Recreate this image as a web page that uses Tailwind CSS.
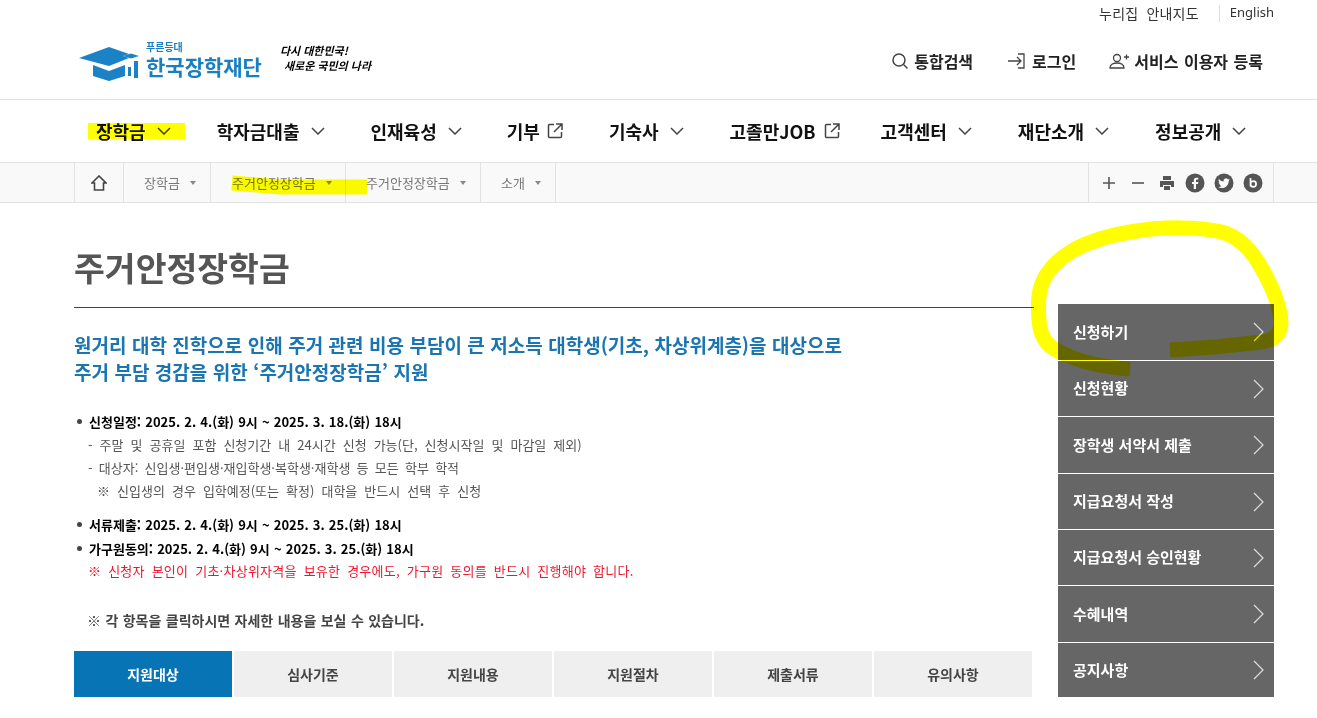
<!DOCTYPE html>
<html lang="ko">
<head>
  <meta charset="UTF-8" />
  <title>주거안정장학금</title>
  <script src="https://cdn.jsdelivr.net/npm/@tailwindcss/browser@4"></script>
</head>
<body class="relative bg-white h-[718px] overflow-hidden text-[#222] font-['Noto_Sans_CJK_KR','Noto_Sans',sans-serif]">

  <!-- header -->
  <header class="h-[100px] border-b border-[#e2e2e2]">
    <div class="w-[1200px] ml-[74px]">
      <div class="h-[26px] flex justify-end items-center text-[14px] text-[#333]">
        <a class="[word-spacing:4px] tracking-[0.2px]">누리집 안내지도</a>
        <span class="w-px h-[17px] bg-[#ddd] ml-[20px] mr-[10px]"></span>
        <a class="font-['Noto_Sans'] text-[13px]">English</a>
      </div>
      <div class="h-[73px] flex items-center justify-between">
        <div class="flex items-center ml-[5px] mb-[2px]">
          <svg width="66" height="36" viewBox="0 0 66 36" class="mt-[3px]">
            <path d="M0 13 30 2 50 9 44 11 50 13 30 21Z" fill="#1b82c5"/>
            <path d="M14 20 30 26 46 20V31L30 36 14 31Z" fill="#1b82c5"/>
            <path d="M44 11 52 8.500 60 11 52 13.500Z" fill="#1b82c5"/>
            <path d="M49 22h3v9h-3zM55 16h4v17h-4z" fill="#1b82c5"/>
          </svg>
          <div class="ml-[1px] text-[#1a7fc1] font-bold">
            <div class="text-[10px] leading-[11px] mb-[2px] -mt-[5px]">푸른등대</div>
            <div class="text-[21px] leading-[24px]">한국장학재단</div>
          </div>
          <div class="ml-[18px] -mt-[8px] text-[11px] leading-[15px] font-bold italic text-black">
            <div>다시 대한민국!</div>
            <div class="ml-[4px]">새로운 국민의 나라</div>
          </div>
        </div>
        <div class="flex items-center text-[16px] font-semibold mr-[11px] mb-[4px]">
          <svg width="18" height="18" viewBox="0 0 18 18" fill="none" stroke="#444" stroke-width="1.500" class="mr-[5px]"><circle cx="8" cy="8" r="6"/><path d="m12.500 12.500 4 4"/></svg>
          <span>통합검색</span>
          <svg width="20" height="18" viewBox="0 0 20 18" fill="none" stroke="#444" stroke-width="1.300" class="ml-[34px] mr-[5px]"><path d="M1 9h13M10 5l4 4-4 4M11 2h6v14h-6"/></svg>
          <span>로그인</span>
          <svg width="20" height="18" viewBox="0 0 20 18" fill="none" stroke="#444" stroke-width="1.300" class="ml-[33px] mr-[5px]"><circle cx="8" cy="6" r="3.500"/><path d="M1 16c0-3 3-5 7-5s7 2 7 5ZM15 5h5M17.500 2.500v5"/></svg>
          <span class="[word-spacing:1px]">서비스 이용자 등록</span>
        </div>
      </div>
    </div>
  </header>

  <!-- main nav -->
  <nav class="h-[62px] w-[1200px] ml-[74px] flex items-center gap-[46px] pl-[22px] text-[18px] font-semibold text-[#111]">
    <a class="flex items-center gap-[11px]">장학금<svg width="14" height="8" viewBox="0 0 14 8" fill="none" stroke="#444" stroke-width="1.500"><path d="m1 1 6 6 6-6"/></svg></a>
    <a class="flex items-center gap-[11px]">학자금대출<svg width="14" height="8" viewBox="0 0 14 8" fill="none" stroke="#444" stroke-width="1.500"><path d="m1 1 6 6 6-6"/></svg></a>
    <a class="flex items-center gap-[11px]">인재육성<svg width="14" height="8" viewBox="0 0 14 8" fill="none" stroke="#444" stroke-width="1.500"><path d="m1 1 6 6 6-6"/></svg></a>
    <a class="flex items-center gap-[7px] -ml-[1px]">기부<svg width="16" height="16" viewBox="0 0 16 16" fill="none" stroke="#444" stroke-width="1.500"><path d="M7 1.500H2.500a1 1 0 0 0-1 1v11a1 1 0 0 0 1 1h11a1 1 0 0 0 1-1V9M9 1h6v6M15 1 7 9"/></svg></a>
    <a class="flex items-center gap-[11px]">기숙사<svg width="14" height="8" viewBox="0 0 14 8" fill="none" stroke="#444" stroke-width="1.500"><path d="m1 1 6 6 6-6"/></svg></a>
    <a class="flex items-center gap-[8px] -mr-[5px]">고졸만JOB<svg width="16" height="16" viewBox="0 0 16 16" fill="none" stroke="#444" stroke-width="1.500"><path d="M7 1.500H2.500a1 1 0 0 0-1 1v11a1 1 0 0 0 1 1h11a1 1 0 0 0 1-1V9M9 1h6v6M15 1 7 9"/></svg></a>
    <a class="flex items-center gap-[11px]">고객센터<svg width="14" height="8" viewBox="0 0 14 8" fill="none" stroke="#444" stroke-width="1.500"><path d="m1 1 6 6 6-6"/></svg></a>
    <a class="flex items-center gap-[11px]">재단소개<svg width="14" height="8" viewBox="0 0 14 8" fill="none" stroke="#444" stroke-width="1.500"><path d="m1 1 6 6 6-6"/></svg></a>
    <a class="flex items-center gap-[11px]">정보공개<svg width="14" height="8" viewBox="0 0 14 8" fill="none" stroke="#444" stroke-width="1.500"><path d="m1 1 6 6 6-6"/></svg></a>
  </nav>

  <!-- breadcrumb -->
  <div class="h-[41px] bg-[#f9f9f9] border-y border-[#e2e2e2]">
    <div class="w-[1200px] h-full ml-[74px] flex justify-between text-[13px] text-[#777]">
      <div class="flex border-l border-[#e2e2e2]">
        <div class="w-[49px] flex items-center justify-center border-r border-[#e2e2e2]">
          <svg width="16" height="16" viewBox="0 0 16 16" fill="none" stroke="#444" stroke-width="1.600"><path d="M1 8 8 1l7 7h-2.500v7h-9V8Z"/></svg>
        </div>
        <div class="w-[87px] pl-[20px] flex items-center gap-[10px] border-r border-[#e2e2e2]">장학금<span class="border-x-[3.5px] border-x-transparent border-t-[4px] border-t-[#888]"></span></div>
        <div class="w-[135px] pl-[21px] flex items-center gap-[10px] border-r border-[#e2e2e2]">주거안정장학금<span class="border-x-[3.5px] border-x-transparent border-t-[4px] border-t-[#888]"></span></div>
        <div class="w-[135px] pl-[20px] flex items-center gap-[10px] border-r border-[#e2e2e2]">주거안정장학금<span class="border-x-[3.5px] border-x-transparent border-t-[4px] border-t-[#888]"></span></div>
        <div class="w-[75px] pl-[20px] flex items-center gap-[10px] border-r border-[#e2e2e2]">소개<span class="border-x-[3.5px] border-x-transparent border-t-[4px] border-t-[#888]"></span></div>
      </div>
      <div class="w-[186px] flex items-center pl-[13px] border-x border-[#e2e2e2]">
        <svg width="14" height="14" viewBox="0 0 14 14" stroke="#555" stroke-width="1.600"><path d="M1 7h12M7 1v12"/></svg>
        <svg width="14" height="14" viewBox="0 0 14 14" stroke="#555" stroke-width="1.600" class="ml-[15px]"><path d="M1 7h12"/></svg>
        <svg width="16" height="16" viewBox="0 0 16 16" fill="#555" class="ml-[14px]"><path d="M4 1h8v4H4zM1 6h14v6h-3v-2H4v2H1zM5 11h6v4H5z"/></svg>
        <svg width="20" height="20" viewBox="0 0 20 20" class="ml-[10px]"><circle cx="10" cy="10" r="9.500" fill="#555"/><path d="M11 16v-5h2l.300-2H11V7.600c0-.7.300-1 1-1h1.300V4.800L11.500 4.700C9.700 4.700 8.800 5.800 8.800 7.400V9H7v2h1.800v5Z" fill="#fff"/></svg>
        <svg width="20" height="20" viewBox="0 0 20 20" class="ml-[9px]"><circle cx="10" cy="10" r="9.500" fill="#555"/><path d="M15.500 6.500c-.5.200-1 .4-1.400.4.500-.3.900-.7 1.100-1.300-.5.300-1 .5-1.500.6a2.400 2.400 0 0 0-4.100 2.200C7.700 8.300 6 7.400 4.900 6c-.6 1.100-.3 2.500.8 3.200-.4 0-.8-.1-1.100-.3 0 1.200.8 2.200 1.900 2.400-.4.100-.7.100-1.100 0 .3 1 1.200 1.600 2.200 1.700-1 .8-2.200 1.100-3.500 1 3.900 2.400 10.300.8 10.700-6.300.4-.4.900-.8 1.200-1.200Z" fill="#fff"/></svg>
        <svg width="20" height="20" viewBox="0 0 20 20" class="ml-[9px]"><circle cx="10" cy="10" r="9.500" fill="#555"/><path d="M7.500 5v8.500M7.500 11a2.800 2.800 0 1 1 5.600 0 2.800 2.800 0 0 1-5.600 0Z" fill="none" stroke="#fff" stroke-width="1.700"/></svg>
      </div>
    </div>
  </div>

  <!-- content -->
  <main class="w-[1200px] ml-[74px] flex">
    <div class="w-[958px]">
      <h1 class="h-[105px] pt-[39px] text-[33.500px] leading-[50px] font-bold text-[#555] border-b border-[#444] mr-[-2px]">주거안정장학금</h1>
      <h2 class="mt-[23px] text-[19px] leading-[27px] font-semibold text-[#1a75b0] [word-spacing:0.150px]">원거리 대학 진학으로 인해 주거 관련 비용 부담이 큰 저소득 대학생(기초, 차상위계층)을 대상으로<br>주거 부담 경감을 위한 ‘주거안정장학금’ 지원</h2>

      <ul class="mt-[25px] text-[13px] leading-[23px] text-[#555]">
        <li class="flex items-center gap-[7px] ml-[3px] font-bold text-black [word-spacing:0.500px]"><span class="w-[5px] h-[5px] rounded-full bg-[#444]"></span>신청일정: 2025. 2. 4.(화) 9시 ~ 2025. 3. 18.(화) 18시</li>
        <li class="ml-[14px] [word-spacing:3.400px]">- 주말 및 공휴일 포함 신청기간 내 24시간 신청 가능(단, 신청시작일 및 마감일 제외)</li>
        <li class="ml-[14px] [word-spacing:2.600px]">- 대상자: 신입생·편입생·재입학생·복학생·재학생 등 모든 학부 학적</li>
        <li class="ml-[23px] [word-spacing:3.400px]">※ 신입생의 경우 입학예정(또는 확정) 대학을 반드시 선택 후 신청</li>
        <li class="flex items-center gap-[7px] ml-[3px] mt-[11px] font-bold text-black [word-spacing:0.500px]"><span class="w-[5px] h-[5px] rounded-full bg-[#444]"></span>서류제출: 2025. 2. 4.(화) 9시 ~ 2025. 3. 25.(화) 18시</li>
        <li class="flex items-center gap-[7px] ml-[3px] mt-[1px] font-bold text-black [word-spacing:0.500px]"><span class="w-[5px] h-[5px] rounded-full bg-[#444]"></span>가구원동의: 2025. 2. 4.(화) 9시 ~ 2025. 3. 25.(화) 18시</li>
        <li class="ml-[14px] -mt-[1px] text-[#f0142d] [word-spacing:3px] tracking-[0.250px]">※ 신청자 본인이 기초·차상위자격을 보유한 경우에도, 가구원 동의를 반드시 진행해야 합니다.</li>
      </ul>

      <p class="mt-[28px] ml-[13px] text-[14px] leading-[20px] font-semibold text-[#444] [word-spacing:0.500px]">※ 각 항목을 클릭하시면 자세한 내용을 보실 수 있습니다.</p>

      <div class="mt-[21px] grid grid-cols-6 gap-[2px] text-[14px] font-semibold text-[#444] text-center leading-[46px]">
        <a class="bg-[#0775b5] text-white">지원대상</a>
        <a class="bg-[#efefef]">심사기준</a>
        <a class="bg-[#efefef]">지원내용</a>
        <a class="bg-[#efefef]">지원절차</a>
        <a class="bg-[#efefef]">제출서류</a>
        <a class="bg-[#efefef]">유의사항</a>
      </div>
    </div>

    <!-- quick menu -->
    <aside class="w-[216px] ml-[26px] pt-[101px] flex flex-col gap-px text-[15px] font-semibold text-white">
      <a class="h-[56px] pl-[15px] pr-[10px] bg-[#666] flex items-center justify-between">신청하기<svg width="11" height="20" viewBox="0 0 11 20" fill="none" stroke="#ddd" stroke-width="1.200"><path d="m1 1 9 9-9 9"/></svg></a>
      <a class="h-[55px] pl-[15px] pr-[10px] bg-[#666] flex items-center justify-between">신청현황<svg width="11" height="20" viewBox="0 0 11 20" fill="none" stroke="#ddd" stroke-width="1.200"><path d="m1 1 9 9-9 9"/></svg></a>
      <a class="h-[56px] pl-[15px] pr-[10px] bg-[#666] flex items-center justify-between">장학생 서약서 제출<svg width="11" height="20" viewBox="0 0 11 20" fill="none" stroke="#ddd" stroke-width="1.200"><path d="m1 1 9 9-9 9"/></svg></a>
      <a class="h-[55px] pl-[15px] pr-[10px] bg-[#666] flex items-center justify-between">지급요청서 작성<svg width="11" height="20" viewBox="0 0 11 20" fill="none" stroke="#ddd" stroke-width="1.200"><path d="m1 1 9 9-9 9"/></svg></a>
      <a class="h-[55px] pl-[15px] pr-[10px] bg-[#666] flex items-center justify-between">지급요청서 승인현황<svg width="11" height="20" viewBox="0 0 11 20" fill="none" stroke="#ddd" stroke-width="1.200"><path d="m1 1 9 9-9 9"/></svg></a>
      <a class="h-[56px] pl-[15px] pr-[10px] bg-[#666] flex items-center justify-between">수혜내역<svg width="11" height="20" viewBox="0 0 11 20" fill="none" stroke="#ddd" stroke-width="1.200"><path d="m1 1 9 9-9 9"/></svg></a>
      <a class="h-[54px] pl-[15px] pr-[10px] bg-[#666] flex items-center justify-between">공지사항<svg width="11" height="20" viewBox="0 0 11 20" fill="none" stroke="#ddd" stroke-width="1.200"><path d="m1 1 9 9-9 9"/></svg></a>
    </aside>
  </main>

  <!-- yellow marker scribbles drawn over the page -->
  <svg width="1317" height="718" viewBox="0 0 1317 718" fill="none" class="absolute left-0 top-0 mix-blend-multiply pointer-events-none">
    <g stroke="#ffff00">
      <path stroke-width="16" d="M88 131H185" />
      <path stroke-width="15" d="M232 183 280 187H367" />
      <path stroke-width="15" stroke-linejoin="round" d="M1170 350 1215 347 1262 342C1275 340 1281 333 1281 322 1280 305 1272 285 1258 262 1248 246 1236 236 1222 232 1200 227 1165 226 1130 232 1095 238 1065 250 1050 270 1040 282 1037 295 1039 320 1040 335 1045 345 1060 352 1075 360 1100 367 1130 369"/>
    </g>
  </svg>
</body>
</html>
